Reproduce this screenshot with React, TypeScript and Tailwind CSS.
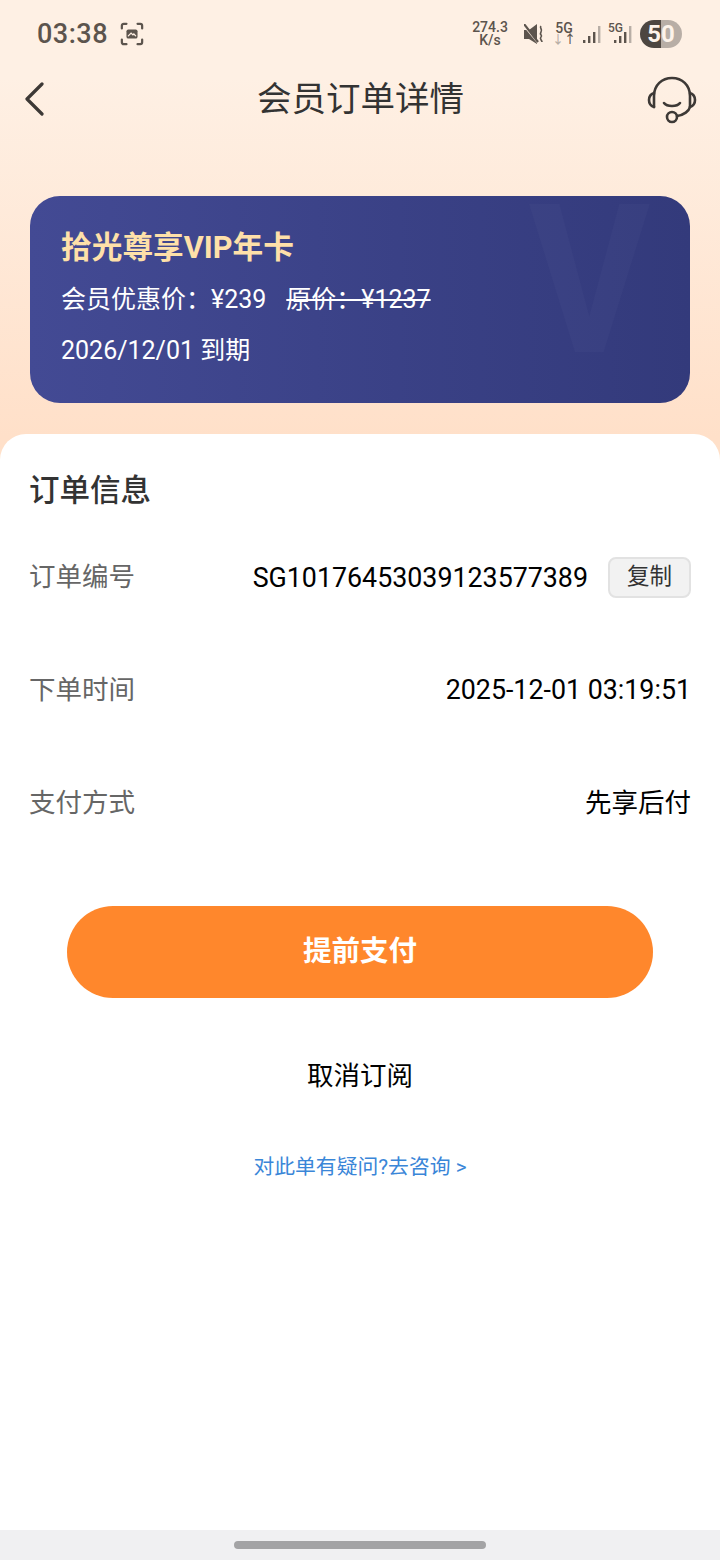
import React from 'react';

const FONT = "font-['Roboto','Noto_Sans_CJK_SC',sans-serif]";

const ScreenshotIcon = () => (
  <svg width="24" height="24" viewBox="0 0 26 26" fill="none" stroke="#5c544d" strokeWidth="2.4" strokeLinecap="round">
    <path d="M2 7V4a2 2 0 0 1 2-2h3M19 2h3a2 2 0 0 1 2 2v3M24 19v3a2 2 0 0 1-2 2h-3M7 24H4a2 2 0 0 1-2-2v-3" />
    <rect x="7" y="8" width="12" height="10" rx="2" fill="#5c544d" stroke="none" />
    <path d="M9 15l3-3 2 2 1-1 2 2" stroke="#fdeee2" strokeWidth="1.4" />
  </svg>
);

const MuteIcon = () => (
  <svg width="21" height="21" viewBox="0 0 21 21" fill="none">
    <path d="M0 6h5l8-6v20l-8-5H0z" fill="#5c544d" />
    <path d="M0 2l14 17" stroke="#fdeee2" strokeWidth="1.5" />
    <path d="M0 0l14 18" stroke="#5c544d" strokeWidth="2.2" />
    <path d="M17 2c-2 2 2 3 0 6s2 3 0 5 1 3 1 5" stroke="#5c544d" strokeWidth="1.6" />
  </svg>
);

const Signal = () => (
  <svg width="19" height="18" viewBox="0 0 19 18">
    <rect x="0" y="15" width="2.4" height="3" fill="#5c544d" />
    <rect x="5" y="11" width="2.4" height="7" fill="#5c544d" />
    <rect x="10" y="7" width="2.4" height="11" fill="#5c544d" />
    <rect x="15" y="1" width="2.4" height="17" fill="#b8aea6" />
  </svg>
);

const HeadsetIcon = () => (
  <svg width="50" height="48" viewBox="0 0 50 48" fill="none" stroke="#3d3936" strokeWidth="2.6" strokeLinecap="round" strokeLinejoin="round">
    <path d="M7 31V20C7 9 15 2 25 2s18 7 18 18v11" />
    <path d="M7 17C4 18 2 21 2 24s2 6 5 7M43 17c3 1 5 4 5 7s-2 6-5 7" />
    <path d="M17 27c3 4 13 4 16 0" />
    <path d="M43 31c-1 4-6 8-13 9" />
    <circle cx="25" cy="41" r="5" />
  </svg>
);

const Row = ({ label, children }: { label: string; children: React.ReactNode }) => (
  <div className="flex h-[113px] items-start justify-between pl-[29px] pr-[29px]">
    <span className="text-[26.5px] leading-[40px] text-[#666666]">{label}</span>
    {children}
  </div>
);

export default function App() {
  return (
    <div className={`${FONT} flex h-[1560px] w-[720px] flex-col overflow-hidden bg-gradient-to-b from-[#fef0e4] from-[5%] to-[#ffe0c9] to-[28%]`}>
      {/* status bar */}
      <div className="flex h-[66px] items-center justify-between pl-[37px] pr-[38px] pt-[2px] text-[#5c544d]">
        <div className="flex items-center gap-[12px]">
          <span className="text-[27px] font-medium tracking-[0.5px]">03:38</span>
          <ScreenshotIcon />
        </div>
        <div className="flex items-center">
          <div className="flex w-[36px] flex-col items-center text-[14px] font-medium leading-[13px]">
            <span>274.3</span>
            <span>K/s</span>
          </div>
          <div className="ml-[16px]"><MuteIcon /></div>
          <div className="ml-[10px] flex w-[18px] flex-col items-center text-[14px] font-medium leading-[12px]">
            <span>5G</span>
            <span className="text-[12px]"><span className="text-[#b8aea6]">↓</span>↑</span>
          </div>
          <div className="ml-[10px]"><Signal /></div>
          <div className="relative ml-[12px] h-[18px]">
            <span className="absolute left-[-6px] top-[-3px] text-[12px] font-medium leading-[12px]">5G</span>
            <Signal />
          </div>
          <div className="ml-[7px] flex h-[28px] w-[42px] items-center justify-center rounded-full bg-gradient-to-r from-[#4d4640] from-50% to-[#b8aea6] to-50% text-[24px] font-bold text-[#fdf3ea]">
            50
          </div>
        </div>
      </div>

      {/* header */}
      <div className="flex h-[66px] items-center justify-between pl-[24px] pr-[23px]">
        <div className="w-[50px]">
          <svg width="20" height="36" viewBox="0 0 20 36" fill="none" stroke="#3d3936" strokeWidth="3.2" strokeLinecap="round" strokeLinejoin="round">
            <path d="M18 3L3 18l15 15" />
          </svg>
        </div>
        <h1 className="mt-[2px] text-[34.5px] font-normal text-[#333333]">会员订单详情</h1>
        <div className="mt-[2px]"><HeadsetIcon /></div>
      </div>

      {/* vip card */}
      <div className="relative mx-[30px] mt-[64px] h-[207px] overflow-hidden rounded-[30px] bg-gradient-to-r from-[#434a94] to-[#333a7b] pl-[31px] pt-[30px] text-white">
        <span className="absolute right-[40px] top-[12px] origin-right scale-x-90 text-[207px] font-bold leading-[147px] text-white/[0.025]">V</span>
        <div className="text-[30.7px] font-bold leading-[44px] text-[#fee0a9]">拾光尊享VIP年卡</div>
        <div className="mt-[12px] flex h-[36px] items-center text-[25px]">
          <span>会员优惠价：¥239</span>
          <span className="ml-[20px] line-through">原价：¥1237</span>
        </div>
        <div className="mt-[15px] text-[25px] leading-[36px]">2026/12/01 到期</div>
      </div>

      {/* sheet */}
      <div className="mt-[31px] flex flex-1 flex-col rounded-t-[26px] bg-white">
        <h2 className="pl-[29px] pt-[34px] text-[30.5px] font-medium leading-[46px] text-[#333333]">订单信息</h2>
        <div className="mt-[43px]">
          <Row label="订单编号">
            <div className="flex items-center">
              <span className="text-[26.8px] leading-[40px] text-black">SG10176453039123577389</span>
              <button className="ml-[20px] flex h-[41px] w-[83px] items-center justify-center rounded-[8px] border-2 border-[#e2e2e2] bg-[#f2f2f2] pb-[2px] text-[22.5px] text-[#333333]">
                复制
              </button>
            </div>
          </Row>
          <Row label="下单时间">
            <span className="text-[26.8px] leading-[40px] text-black">2025-12-01 03:19:51</span>
          </Row>
          <Row label="支付方式">
            <span className="text-[26.5px] leading-[40px] text-black">先享后付</span>
          </Row>
        </div>
        <div className="mx-[67px] mt-[10px] flex h-[92px] items-center justify-center rounded-full bg-[#ff872c] text-[28.5px] font-bold text-white">
          提前支付
        </div>
        <div className="mt-[58px] text-center text-[26.5px] leading-[40px] text-black">取消订阅</div>
        <div className="mt-[57px] text-center text-[20.8px] leading-[28px] text-[#3a86d8]">对此单有疑问?去咨询 &gt;</div>
        <div className="flex-1" />
        <div className="flex h-[30px] items-center justify-center bg-[#f0f0f2]">
          <div className="h-[8px] w-[252px] rounded-full bg-[#a3a3a5]" />
        </div>
      </div>
    </div>
  );
}
